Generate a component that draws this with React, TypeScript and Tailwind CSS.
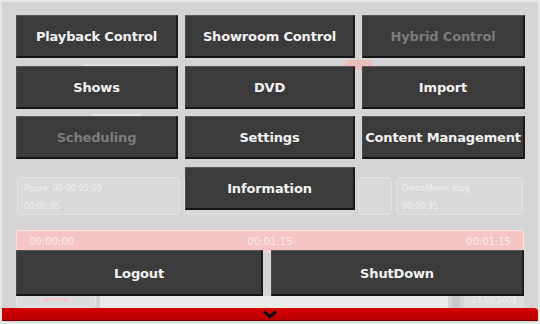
import React from 'react';

const font = { fontFamily: '"DejaVu Sans", Verdana, sans-serif' };

type Item = { label: string; disabled?: boolean };

const menu: Item[] = [
  { label: 'Playback Control' },
  { label: 'Showroom Control' },
  { label: 'Hybrid Control', disabled: true },
  { label: 'Shows' },
  { label: 'DVD' },
  { label: 'Import' },
  { label: 'Scheduling', disabled: true },
  { label: 'Settings' },
  { label: 'Content Management' },
];

const MenuButton = ({ item, className = '' }: { item: Item; className?: string }) => (
  <div
    className={`flex items-center justify-center pt-[2px] bg-[#3b3b3b] border-t border-l border-t-[#5a5a5a] border-l-[#4a4a4a] border-b-2 border-r-2 border-b-[#141414] border-r-[#1c1c1c] text-[13px] font-bold tracking-[-0.15px] ${
      item.disabled ? 'text-[#7c7c7c]' : 'text-[#f2f2f2]'
    } ${className}`}
  >
    {item.label}
  </div>
);

const App = () => {
  return (
    <div className="relative w-[540px] h-[324px] overflow-hidden bg-[#e6e6e6] p-[2px]" style={font}>
      {/* faded app underneath */}
      <div className="flex flex-col w-full h-full bg-[#d4d4d4] rounded-[2px]">
        <div className="h-[175px] relative">
          <div className="absolute left-[80px] top-[62px] w-[80px] h-[6px] bg-[#e6e6e6] opacity-60 rounded-full" />
          <div className="absolute left-[90px] top-[112px] w-[50px] h-[6px] bg-[#eeeeee] opacity-70" />
          <div className="absolute left-[340px] top-[58px] w-[30px] h-[10px] bg-[#f0b8b8] opacity-80 rounded-tl-full" />
        </div>
        <div className="flex h-[38px] gap-[4px] px-[15px]">
          <div className="w-[163px] rounded-[4px] border border-[#e2e2e2] bg-[#d9d9d9] px-[6px] pt-[4px] text-[8px] leading-[14px] text-[#eeeeee]">
            <div>Pause: 00:00:05:00</div>
            <div className="mt-[4px]">00:00:05</div>
          </div>
          <div className="w-[170px] rounded-[4px] border border-[#e2e2e2] bg-[#d9d9d9] px-[6px] pt-[22px] text-[8px] leading-[14px] text-[#eeeeee]">
            00:00:35
          </div>
          <div className="w-[34px] rounded-[4px] border border-[#e2e2e2] bg-[#d9d9d9]" />
          <div className="flex-1 rounded-[4px] border border-[#e2e2e2] bg-[#d9d9d9] px-[5px] pt-[4px] text-[8px] leading-[14px] text-[#eeeeee]">
            <div>DemoMovie.mpg</div>
            <div className="mt-[4px]">00:00:35</div>
          </div>
        </div>
        <div className="mt-[15px] mx-[14px] h-[22px] rounded-[3px] border border-[#fbe0e0] bg-[#f5c4c4] flex items-center justify-between px-[12px] text-[10px] text-[#fbeaea]">
          <span>00:00:00</span>
          <span>00:01:15</span>
          <span>00:01:15</span>
        </div>
        <div className="flex-1 flex items-end px-[14px] gap-[4px]">
          <div className="w-[80px] h-[12px] rounded-b-[4px] bg-[#dcdcdc] border border-t-0 border-[#e4e4e4] flex justify-center">
            <div className="w-[26px] h-[3px] mt-[2px] bg-[#f2caca]" />
          </div>
          <div className="flex-1 h-[12px] bg-[#ebebeb]" />
          <div className="w-[8px] h-[12px] bg-[#c8c8c8]" />
          <div className="w-[60px] h-[12px] bg-[#dddddd] text-[8px] leading-[10px] text-[#eeeeee] text-center">27.10.2008</div>
        </div>
        <div className="h-[13px] mb-[1px] bg-gradient-to-b from-[#d80000] to-[#b80000] border-b border-[#7a0000] rounded-tr-[4px] flex justify-center">
          <svg width="16" height="9" viewBox="0 0 16 9" className="mt-[2px]">
            <path d="M2 1.5 L8 6.5 L14 1.5" fill="none" stroke="#111" strokeWidth="3" strokeLinejoin="miter" />
          </svg>
        </div>
      </div>

      {/* menu overlay */}
      <div className="absolute left-[16px] top-[15px] grid grid-cols-[162px_170px_163px] auto-rows-[43px] gap-x-[7px] gap-y-[7.5px]">
        {menu.map((m) => (
          <MenuButton key={m.label} item={m} />
        ))}
        <MenuButton item={{ label: 'Information' }} className="col-start-2" />
      </div>
      <div className="absolute left-[16px] top-[250px] flex gap-[8px]">
        <MenuButton item={{ label: 'Logout' }} className="w-[247px] h-[46px]" />
        <MenuButton item={{ label: 'ShutDown' }} className="w-[253px] h-[46px]" />
      </div>
    </div>
  );
};

export default App;
